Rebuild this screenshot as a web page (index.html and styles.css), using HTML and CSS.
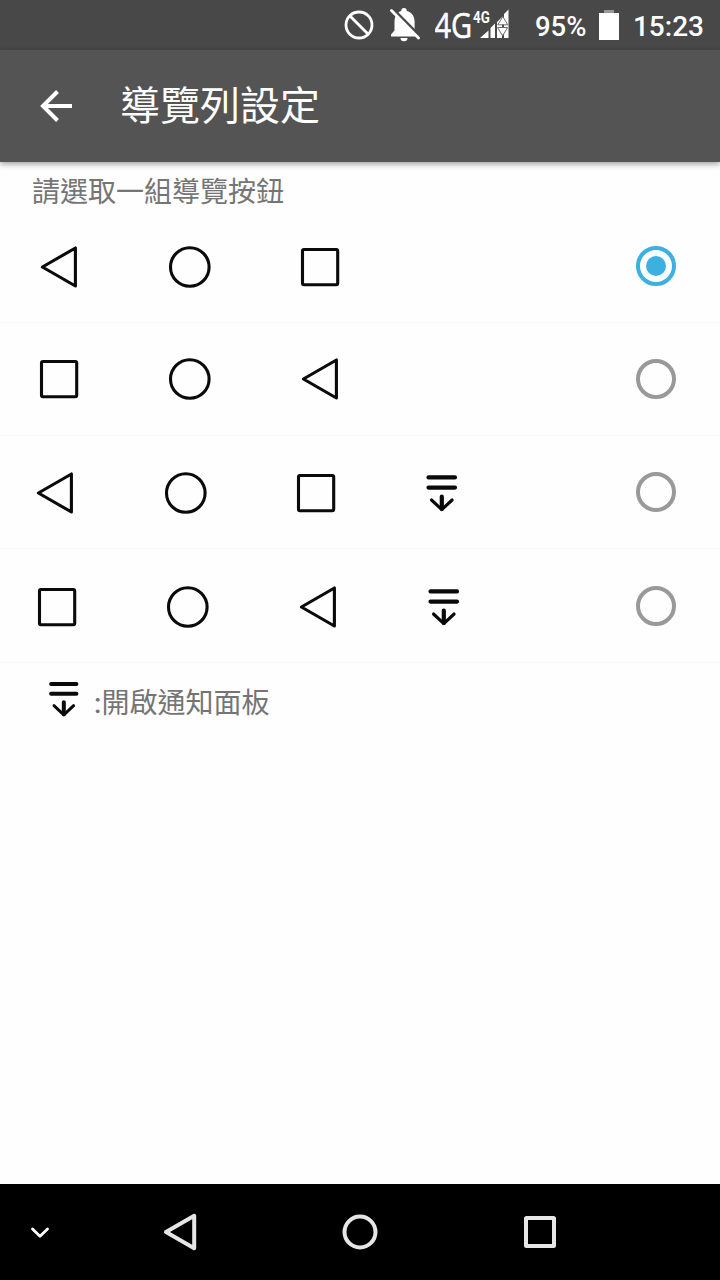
FILE: index.html
```html
<!DOCTYPE html>
<html lang="zh-Hant">

<head>
    <meta charset="UTF-8">
    <meta name="viewport" content="width=device-width, initial-scale=1.0">
    <title>導覽列設定</title>
    <link rel="stylesheet" href="styles.css">
</head>

<body>
    <!-- 共用圖示 -->
    <svg class="defs">
        <symbol id="back" viewBox="0 0 44 44">
            <path d="M38.4 3 V41 L5.400 22 Z" />
        </symbol>
        <symbol id="home" viewBox="0 0 44 44">
            <circle cx="21.8" cy="22" r="19.3" />
        </symbol>
        <symbol id="recent" viewBox="0 0 44 44">
            <rect x="4.5" y="4.5" width="35.2" height="35.2" rx="1.5" />
        </symbol>
        <symbol id="panel" viewBox="0 0 44 44">
            <path class="bold" d="M8.500 6.400 H35 M8.500 16.600 H35 M21.800 25.500 V38" />
            <path d="M11.500 29 L21.800 38.600 L32.100 29" />
        </symbol>
    </svg>

    <div class="status">
        <svg class="block" width="30" height="30" viewBox="0 0 30 30">
            <circle cx="15" cy="15" r="13" />
            <path d="M6 6 L24 24" />
        </svg>
        <svg class="bell" width="32" height="36" viewBox="0 0 32 36">
            <path class="fill" d="M16 1 c1.800 0 2.800 1.200 2.800 3 c5 1.300 7.800 5.500 7.800 10.500 v9 l4 6 H3 v-2 l3.500 -4 v-9 c0 -5 2.500 -9.200 6.700 -10.500 c0 -1.800 1 -3 2.800 -3 Z M12.500 31 h7 a3.500 3.200 0 0 1 -7 0 Z" />
            <path class="gap" d="M5 2 L32 29.500" />
            <path class="slash" d="M3.500 3.500 L30.500 31" />
        </svg>
        <svg class="signal" width="76" height="50" viewBox="0 0 76 50">
            <text class="big" transform="translate(-0.5 38) scale(.83 1)">4G</text>
            <text class="small" transform="translate(38 22.500) scale(.81 1)">4G</text>
            <path class="fill" d="M45 38 L53.500 30.500 V38 Z M55.500 28 L60 23.500 V38 H55.500 Z M62 22 L67 17 V38 H62 Z M69 14 L73.500 9.500 V38 H69 Z" />
            <path class="arrow" d="M63 24.500 L67.800 16.500 L72.600 24.500 Z M63 27.500 H72.600 L67.800 35.500 Z" />
        </svg>
        <span class="percent">95%</span>
        <svg class="battery" width="20" height="30" viewBox="0 0 20 30">
            <rect x="5" y="0" width="10" height="4" fill="#999" />
            <rect x="0" y="3" width="20" height="27" fill="#fff" />
        </svg>
        <span class="time">15:23</span>
    </div>

    <div class="header">
        <svg class="arrow_left" width="32" height="32" viewBox="0 0 32 32">
            <path d="M32 16 H3 M17.500 1.500 L3 16 L17.500 30.500" />
        </svg>
        <h1>導覽列設定</h1>
    </div>

    <div class="content">
        <p class="tip">請選取一組導覽按鈕</p>
        <ul>
            <li class="row1">
                <div class="icons">
                    <svg><use href="#back" /></svg>
                    <svg><use href="#home" /></svg>
                    <svg><use href="#recent" /></svg>
                </div>
                <span class="radio checked"></span>
            </li>
            <li class="row2">
                <div class="icons">
                    <svg><use href="#recent" /></svg>
                    <svg><use href="#home" /></svg>
                    <svg><use href="#back" /></svg>
                </div>
                <span class="radio"></span>
            </li>
            <li class="row3">
                <div class="icons">
                    <svg><use href="#back" /></svg>
                    <svg><use href="#home" /></svg>
                    <svg><use href="#recent" /></svg>
                    <svg class="panel"><use href="#panel" /></svg>
                </div>
                <span class="radio"></span>
            </li>
            <li class="row4">
                <div class="icons">
                    <svg><use href="#recent" /></svg>
                    <svg><use href="#home" /></svg>
                    <svg><use href="#back" /></svg>
                    <svg class="panel"><use href="#panel" /></svg>
                </div>
                <span class="radio"></span>
            </li>
        </ul>
        <div class="note">
            <svg><use href="#panel" /></svg>
            <span><b>:</b>開啟通知面板</span>
        </div>
    </div>

    <div class="navbar">
        <svg class="down" width="20" height="14" viewBox="0 0 20 14">
            <path d="M2.500 4 L10 11.300 L17.500 4" />
        </svg>
        <svg width="36" height="40" viewBox="0 0 36 40">
            <path d="M32.200 3.800 V36.200 L4 20 Z" />
        </svg>
        <svg width="36" height="40" viewBox="0 0 36 40">
            <circle cx="18" cy="20" r="15.500" />
        </svg>
        <svg width="36" height="40" viewBox="0 0 36 40">
            <rect x="4" y="6" width="28" height="28" rx="0.500" />
        </svg>
    </div>
</body>

</html>
```

FILE: styles.css
```css
* {
    margin: 0;
    padding: 0;
    box-sizing: border-box;
}

body {
    width: 720px;
    height: 1280px;
    display: flex;
    flex-direction: column;
    overflow: hidden;
    background-color: #fefefe;
    font-family: Roboto, "Noto Sans CJK TC", sans-serif;
}

svg {
    display: block;
    flex: none;
    fill: none;
    stroke-linecap: round;
    stroke-linejoin: round;
}

.defs {
    position: absolute;
    width: 0;
    height: 0;
}

/* 狀態列 */
.status {
    height: 50px;
    flex: none;
    display: flex;
    align-items: center;
    justify-content: flex-end;
    padding-right: 16px;
    background-color: #484848;
    color: #fff;
    font-size: 28px;
    font-weight: 500;
}

.status .fill {
    fill: #fff;
}

.status span {
    padding-top: 2px;
}

.block {
    margin-right: 14px;
    stroke: #fff;
    stroke-width: 2.8;
}

.bell {
    margin-right: 15px;
}

.bell .gap {
    stroke: #484848;
    stroke-width: 3;
}

.bell .slash {
    stroke: #fff;
    stroke-width: 2.8;
}

.signal {
    margin-right: 24px;
}

.signal text {
    fill: #fff;
}

.signal .big {
    font-family: "Open Sans", sans-serif;
    font-size: 35px;
    font-weight: 400;
    stroke: #fff;
    stroke-width: .6;
}

.signal .small {
    font-size: 16.5px;
    font-weight: 700;
}

.signal .arrow {
    fill: #fff;
    stroke: #6a6a6a;
    stroke-width: 1;
}

.percent {
    width: 53px;
    font-size: 27.5px;
}

.battery {
    margin: 0 14px 0 11px;
}

/* 標題列 */
.header {
    position: relative;
    height: 112px;
    flex: none;
    display: flex;
    align-items: center;
    padding-left: 40px;
    background-color: #545454;
    color: #fff;
    box-shadow: 0 2px 6px rgba(0, 0, 0, .4);
}

.arrow_left {
    stroke: #fff;
    stroke-width: 4;
    stroke-linecap: butt;
    stroke-linejoin: miter;
}

.header h1 {
    margin-left: 48px;
    padding-top: 2px;
    font-size: 40px;
    font-weight: 400;
    line-height: 110px;
}

/* 內容 */
.content {
    flex: 1;
    color: #757575;
    font-size: 28px;
}

.tip {
    height: 47.6px;
    padding-left: 32px;
    line-height: 62px;
}

.content ul {
    list-style: none;
}

.content li {
    height: 113.3px;
    display: flex;
    align-items: center;
    justify-content: space-between;
    padding-right: 44px;
    border-bottom: 1px solid #f7f7f7;
}

.icons {
    display: flex;
    gap: 86.7px;
}

.icons svg,
.note svg {
    width: 44px;
    height: 44px;
    stroke: #0a0a0a;
    stroke-width: 3.1;
}

.icons .panel {
    margin-left: -5px;
}

.bold {
    stroke-width: 4.2;
}

.row1 .icons {
    padding: 3px 0 0 37px;
}

.row2 .icons {
    padding-left: 37px;
}

.row3 .icons {
    padding: 1.6px 0 0 33px;
}

.row4 .icons {
    padding: 3px 0 0 35px;
}

.radio {
    width: 40px;
    height: 40px;
    border: 4px solid #999;
    border-radius: 50%;
}

.checked {
    padding: 6px;
    border-color: #3cb1e0;
}

.checked::before {
    content: "";
    display: block;
    height: 20px;
    border-radius: 50%;
    background-color: #3cb1e0;
}

.note {
    display: flex;
    align-items: center;
    height: 76px;
    padding-left: 43px;
}

.note svg {
    width: 42px;
    height: 42px;
    margin-top: -4px;
}

.note span {
    margin-left: 9px;
}

.note b {
    font-family: Roboto, sans-serif;
    font-weight: 500;
}

/* 底部導覽列 */
.navbar {
    height: 96px;
    flex: none;
    display: flex;
    align-items: center;
    padding-left: 30px;
    background-color: #000;
    stroke: #e6e6e6;
    stroke-width: 4;
}

.navbar svg {
    margin-right: 144px;
}

.navbar .down {
    margin-right: 112px;
    stroke: #fff;
    stroke-width: 2.8;
}
```
